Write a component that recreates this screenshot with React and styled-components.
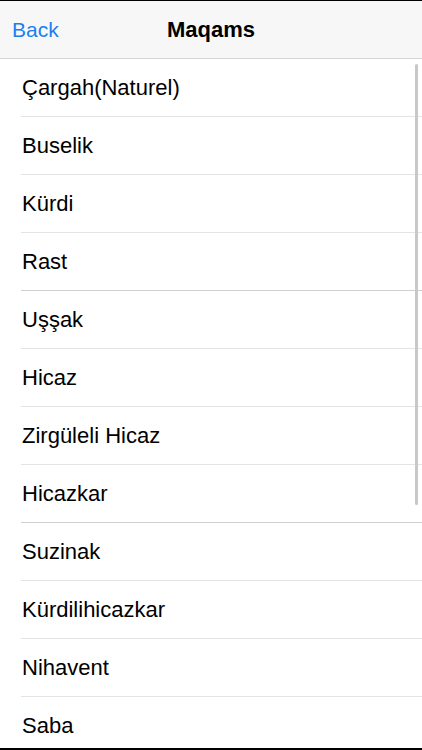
import React from 'react';
import styled, { createGlobalStyle } from 'styled-components';

const GlobalStyle = createGlobalStyle`
  html, body {
    margin: 0;
    padding: 0;
    background: #ffffff;
  }
  body {
    font-family: "Liberation Sans", Arial, sans-serif;
    -webkit-font-smoothing: antialiased;
  }
`;

const Screen = styled.div`
  position: relative;
  width: 422px;
  height: 750px;
  box-sizing: border-box;
  border-top: 1px solid #000;
  border-bottom: 2px solid #000;
  overflow: hidden;
  display: flex;
  flex-direction: column;
  background: #fff;
`;

const NavBar = styled.div`
  position: relative;
  height: 57px;
  flex-shrink: 0;
  display: flex;
  align-items: center;
  justify-content: center;
  background: #f7f7f7;
  border-bottom: 1px solid #d6d6d6;
`;

const BackButton = styled.button`
  position: absolute;
  left: 12px;
  top: 50%;
  transform: translateY(-50%);
  border: none;
  background: none;
  padding: 0;
  font-family: inherit;
  font-size: 21px;
  color: #1c7ff0;
  cursor: pointer;
`;

const Title = styled.div`
  font-size: 22px;
  font-weight: 700;
  color: #000;
  margin-top: 1px;
`;

const List = styled.ul`
  list-style: none;
  margin: 0;
  padding: 0;
  flex: 1;
  overflow: hidden;
`;

const Row = styled.li`
  height: 57px;
  display: flex;
  align-items: center;
  padding-left: 22px;
  font-size: 22px;
  color: #000;
  border-bottom: 1px solid transparent;
  position: relative;
  &::after {
    content: '';
    position: absolute;
    left: 21px;
    right: 0;
    bottom: -1px;
    height: 1px;
    background: ${p => (p.$dark ? '#cfcfcf' : '#e4e4e4')};
  }
`;

const ScrollThumb = styled.div`
  position: absolute;
  right: 4px;
  top: 63px;
  width: 3px;
  height: 441px;
  border-radius: 2px;
  background: #c8c8c8;
`;

const maqams = [
  'Çargah(Naturel)',
  'Buselik',
  'Kürdi',
  'Rast',
  'Uşşak',
  'Hicaz',
  'Zirgüleli Hicaz',
  'Hicazkar',
  'Suzinak',
  'Kürdilihicazkar',
  'Nihavent',
  'Saba',
];

export default function App() {
  return (
    <>
      <GlobalStyle />
      <Screen>
        <NavBar>
          <BackButton>Back</BackButton>
          <Title>Maqams</Title>
        </NavBar>
        <List>
          {maqams.map((m, i) => (
            <Row key={m} $dark={i === 3 || i === 7}>{m}</Row>
          ))}
        </List>
        <ScrollThumb />
      </Screen>
    </>
  );
}
